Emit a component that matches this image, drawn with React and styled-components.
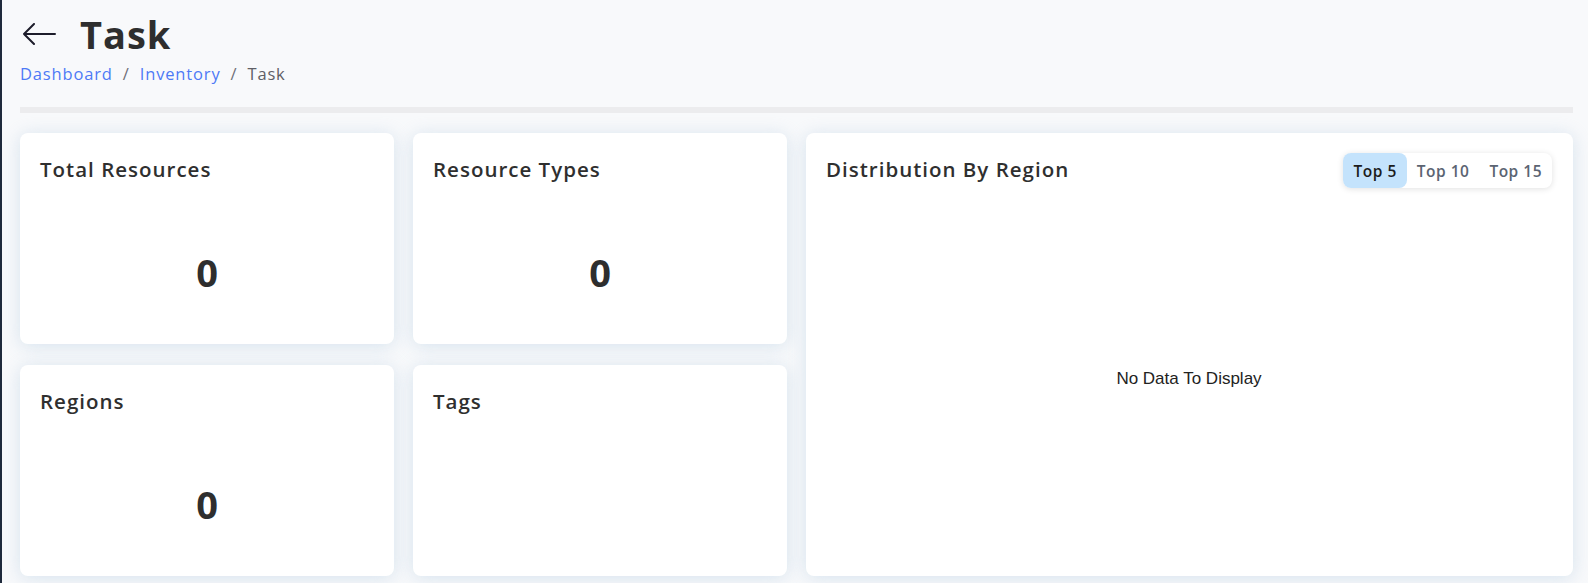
import React, { useState } from 'react';
import styled, { createGlobalStyle } from 'styled-components';

const GlobalStyle = createGlobalStyle`
    html, body {
        margin: 0;
        padding: 0;
        background: #f8f9fb;
        font-family: "Open Sans", "Noto Sans", sans-serif;
        color: #2f2f2f;
    }
    * { box-sizing: border-box; }
`;

const Page = styled.div`
    min-height: 583px;
    border-left: 2px solid #1f2a3c;
    padding: 10px 15px 8px 18px;
`;

const TitleRow = styled.div`
    display: flex;
    align-items: center;
    gap: 24px;
    height: 48px;
`;

const BackButton = styled.button`
    border: none;
    background: none;
    padding: 0;
    margin-left: 2px;
    display: flex;
    align-items: center;
    cursor: pointer;
    color: #1d1d2b;
`;

const Title = styled.h1`
    margin: 0;
    font-size: 38px;
    font-weight: 700;
    color: #2e2e2e;
    letter-spacing: 1px;
`;

const Breadcrumbs = styled.nav`
    display: flex;
    align-items: center;
    gap: 10px;
    margin-top: 3px;
    font-size: 16.5px;
    letter-spacing: 0.85px;
    height: 24px;
`;

const Crumb = styled.a`
    color: ${p => (p.$current ? '#5f5f66' : '#4d79f6')};
    text-decoration: none;
    cursor: ${p => (p.$current ? 'default' : 'pointer')};
`;

const Sep = styled.span`
    color: #6f6f78;
`;

const Divider = styled.div`
    height: 6px;
    background: #ececee;
    margin: 22px 0 20px;
`;

const Grid = styled.div`
    display: grid;
    grid-template-columns: 374px 374px 1fr;
    grid-template-rows: 211px 211px;
    column-gap: 19px;
    row-gap: 21px;
`;

const Card = styled.section`
    background: #ffffff;
    border-radius: 8px;
    box-shadow: 0 2px 18px rgba(172, 200, 222, 0.45);
    padding: ${p => (p.$tall ? '20px 21px 20px 20px' : '22px 20px 20px')};
    display: flex;
    flex-direction: column;
    grid-row: ${p => p.$rows || 'auto'};
    grid-column: ${p => p.$col || 'auto'};
`;

const CardHeader = styled.div`
    display: flex;
    align-items: center;
    justify-content: space-between;
    min-height: 26px;
`;

const CardTitle = styled.h2`
    margin: ${p => (p.$raised ? '-4px 0 0' : '0')};
    font-size: 20.5px;
    font-weight: 600;
    letter-spacing: 1px;
    color: #2f2f2f;
    white-space: nowrap;
`;

const StatValue = styled.div`
    flex: 1;
    display: flex;
    align-items: center;
    justify-content: center;
    padding-top: 36px;
    font-size: 38px;
    font-weight: 700;
    color: #2e2e2e;
`;

const ToggleGroup = styled.div`
    display: flex;
    background: #fff;
    border-radius: 8px;
    box-shadow: 0 1px 6px rgba(0, 0, 0, 0.12);
`;

const ToggleButton = styled.button`
    border: none;
    height: 35px;
    padding: 0 10px;
    border-radius: 8px;
    white-space: nowrap;
    font-family: inherit;
    font-size: 15.5px;
    font-weight: 600;
    letter-spacing: 0.5px;
    cursor: pointer;
    background: ${p => (p.$active ? '#c4e3fc' : 'transparent')};
    color: ${p => (p.$active ? '#1c1c1c' : '#5b6472')};
`;

const Empty = styled.div`
    flex: 1;
    display: flex;
    align-items: center;
    justify-content: center;
    padding-top: 14px;
    font-family: "Liberation Sans", Arial, sans-serif;
    font-size: 17px;
    color: #222;
`;

const BackArrow = () => (
    <svg width="34" height="22" viewBox="0 0 34 22" fill="none">
        <path d="M33 11H2M12 1L2 11l10 10" stroke="currentColor" strokeWidth="2" strokeLinecap="round" strokeLinejoin="round" />
    </svg>
);

const stats = [
    { title: 'Total Resources', value: 0 },
    { title: 'Resource Types', value: 0 },
    { title: 'Regions', value: 0 },
    { title: 'Tags', value: null },
];

const tops = ['Top 5', 'Top 10', 'Top 15'];

const StatCard = ({ title, value }) => (
    <Card>
        <CardHeader><CardTitle>{title}</CardTitle></CardHeader>
        <StatValue>{value}</StatValue>
    </Card>
);

export default function App() {
    const [top, setTop] = useState('Top 5');

    return (
        <Page>
            <GlobalStyle />
            <TitleRow>
                <BackButton aria-label="Back"><BackArrow /></BackButton>
                <Title>Task</Title>
            </TitleRow>
            <Breadcrumbs>
                <Crumb>Dashboard</Crumb>
                <Sep>/</Sep>
                <Crumb>Inventory</Crumb>
                <Sep>/</Sep>
                <Crumb $current>Task</Crumb>
            </Breadcrumbs>
            <Divider />
            <Grid>
                {stats.map(s => <StatCard key={s.title} {...s} />)}
                <Card $tall $rows="1 / span 2" $col="3">
                    <CardHeader>
                        <CardTitle $raised>Distribution By Region</CardTitle>
                        <ToggleGroup>
                            {tops.map(t => (
                                <ToggleButton key={t} $active={t === top} onClick={() => setTop(t)}>{t}</ToggleButton>
                            ))}
                        </ToggleGroup>
                    </CardHeader>
                    <Empty>No Data To Display</Empty>
                </Card>
            </Grid>
        </Page>
    );
}
